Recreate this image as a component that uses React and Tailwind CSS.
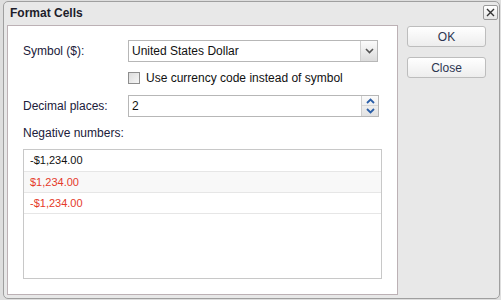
export default function App() {
  const font = { fontFamily: '"Liberation Sans", Arial, sans-serif' };
  return (
    <div className="w-[501px] h-[300px] bg-[#dedede] overflow-hidden pl-[3px] pt-[1px]" style={font}>
      <div className="w-[497px] h-[298px] border border-[#9f9f9f] rounded-[5px] bg-[#e8e8e8] flex flex-col">
        <div className="h-[23px] flex items-start justify-between shrink-0">
          <div className="pl-[6px] pt-[4px] text-[12px] leading-[14px] font-bold text-[#1d1d2b]">Format Cells</div>
          <div className="mt-[3px] mr-[1px] w-[15px] h-[15px] border border-[#9a9a9a] rounded-[2px] bg-gradient-to-b from-[#ffffff] to-[#e6e6e6] flex items-center justify-center">
            <svg width="9" height="9" viewBox="0 0 9 9">
              <path d="M1 1 L8 8 M8 1 L1 8" stroke="#333" strokeWidth="1.4" fill="none" />
            </svg>
          </div>
        </div>
        <div className="flex pl-[3px]">
          <div className="w-[391px] h-[270px] border border-[#bcb1b5] bg-white pl-[15px] pt-[14px] flex flex-col text-[12px] text-[#20203a]">
            <div className="flex items-center h-[22px]">
              <div className="w-[105px]">Symbol ($):</div>
              <div className="w-[250px] h-[22px] border border-[#b7b7b7] flex items-center">
                <div className="flex-1 pl-[3px] text-[#111]">United States Dollar</div>
                <div className="w-[17px] h-[20px] border-l border-[#cfcfcf] bg-gradient-to-b from-[#fbfbfb] to-[#dcdcdc] flex items-center justify-center">
                  <svg width="9" height="6" viewBox="0 0 9 6">
                    <path d="M1 1 L4.5 4.5 L8 1" stroke="#555" strokeWidth="1.6" fill="none" />
                  </svg>
                </div>
              </div>
            </div>
            <div className="flex items-center h-[16px] mt-[8px] pl-[105px]">
              <div className="w-[12px] h-[12px] border border-[#8e8e8e] bg-gradient-to-br from-[#dcdcdc] to-[#f6f6f6]" />
              <div className="ml-[6px] text-[#111]">Use currency code instead of symbol</div>
            </div>
            <div className="flex items-center h-[22px] mt-[9px]">
              <div className="w-[105px]">Decimal places:</div>
              <div className="w-[251px] h-[22px] border border-[#b7b7b7] flex items-center">
                <div className="flex-1 pl-[3px] text-[#111]">2</div>
                <div className="w-[17px] h-[20px] border-l border-[#cfcfcf] bg-gradient-to-b from-[#fbfbfb] to-[#e2e2e2] flex flex-col">
                  <div className="h-[10px] flex items-center justify-center border-b border-[#d6d6d6]">
                    <svg width="9" height="6" viewBox="0 0 9 6">
                      <path d="M1 5 L4.5 1.5 L8 5" stroke="#2a5ea8" strokeWidth="1.8" fill="none" />
                    </svg>
                  </div>
                  <div className="h-[10px] flex items-center justify-center">
                    <svg width="9" height="6" viewBox="0 0 9 6">
                      <path d="M1 1 L4.5 4.5 L8 1" stroke="#2a5ea8" strokeWidth="1.8" fill="none" />
                    </svg>
                  </div>
                </div>
              </div>
            </div>
            <div className="h-[16px] mt-[8px] flex items-center">Negative numbers:</div>
            <div className="mt-[8px] w-[359px] h-[130px] border border-[#c8c8c8] flex flex-col text-[11px]">
              <div className="h-[22px] border-b border-[#e6e6e6] flex items-center pl-[6px] text-[#111]">-$1,234.00</div>
              <div className="h-[21px] border-b border-[#e6e6e6] bg-[#f8f8f8] flex items-center pl-[6px] text-[#e53a2a]">$1,234.00</div>
              <div className="h-[21px] border-b border-[#e6e6e6] flex items-center pl-[6px] text-[#e53a2a]">-$1,234.00</div>
            </div>
          </div>
          <div className="ml-[9px] pt-[1px] flex flex-col">
            <div className="w-[79px] h-[21px] border border-[#bdbdbd] rounded-[3px] bg-gradient-to-b from-[#ffffff] to-[#ededed] flex items-center justify-center text-[12px] text-[#2b3550]">OK</div>
            <div className="mt-[10px] w-[79px] h-[21px] border border-[#bdbdbd] rounded-[3px] bg-gradient-to-b from-[#ffffff] to-[#ededed] flex items-center justify-center text-[12px] text-[#2b3550]">Close</div>
          </div>
        </div>
      </div>
    </div>
  );
}
